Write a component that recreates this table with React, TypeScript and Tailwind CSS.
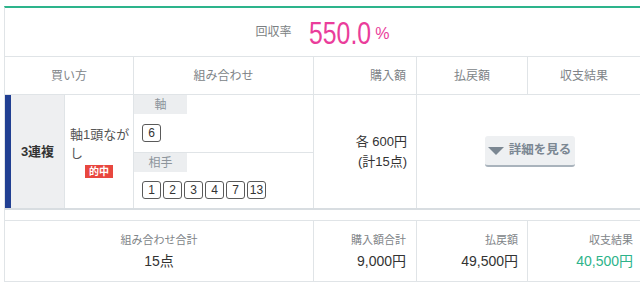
const line = "border-[#e0e4e7]";

function NumBox({ n }: { n: string }) {
  return (
    <div className="w-[19px] h-[18px] border border-[#5a5a5a] rounded-[3px] flex items-center justify-center text-[12px] leading-none text-[#333]">
      {n}
    </div>
  );
}

function Label({ text }: { text: string }) {
  return (
    <div className="w-[53px] h-[19px] bg-[#eceef0] flex items-center justify-center text-[12px] text-[#8d959c]">
      {text}
    </div>
  );
}

export default function App() {
  return (
    <div className="w-[640px] h-[286px] bg-white overflow-hidden pt-[6px] pl-[4px] font-['Liberation_Sans','Noto_Sans_CJK_JP',sans-serif]">
      <div className={`border-l ${line} border-t-2 border-t-[#2db48b]`}>
        {/* 回収率 */}
        <div className={`h-[49px] border-b ${line} flex items-center justify-center`}>
          <span className="text-[12px] text-[#7b7f83] mr-[17px]">回収率</span>
          <span className="inline-block origin-left scale-x-[0.8] mr-[-15px] font-['Liberation_Sans',sans-serif] text-[31px] leading-none text-[#ea3d9b] mt-[2px]">
            550.0
          </span>
          <span className="text-[16px] text-[#ea3d9b] ml-[4px] mt-[4px]">%</span>
        </div>

        {/* column headers */}
        <div className={`h-[38px] border-b ${line} grid grid-cols-[129px_180px_103px_111px_1fr] text-[12px] text-[#808488]`}>
          <div className={`border-r ${line} flex items-center justify-center`}>買い方</div>
          <div className={`border-r ${line} flex items-center justify-center`}>組み合わせ</div>
          <div className={`border-r ${line} flex items-center justify-end pr-[10px]`}>購入額</div>
          <div className={`border-r ${line} flex items-center justify-center`}>払戻額</div>
          <div className="flex items-center justify-center">収支結果</div>
        </div>

        {/* data row */}
        <div className="h-[115px] border-b-2 border-[#d8dde1] grid grid-cols-[129px_180px_103px_1fr]">
          <div className={`flex border-r ${line}`}>
            <div className="w-[6px] bg-[#213f92]" />
            <div className={`w-[54px] bg-[#eeeff1] border-r ${line} flex items-center justify-center text-[13px] font-bold text-[#333]`}>
              3連複
            </div>
            <div className="flex-1 flex flex-col justify-center pl-[5px] pr-[1px]">
              <div className="text-[13px] leading-[19px] text-[#555]">軸1頭ながし</div>
              <div className="flex justify-center mt-[2px] pr-[4px]">
                <span className="bg-[#e8473f] text-white text-[10px] font-bold leading-[13px] px-[4px]">的中</span>
              </div>
            </div>
          </div>

          <div className={`flex flex-col border-r ${line}`}>
            <div className={`h-[58px] border-b ${line}`}>
              <Label text="軸" />
              <div className="flex gap-[2px] pl-[8px] mt-[10px]">
                <NumBox n="6" />
              </div>
            </div>
            <div className="flex-1">
              <Label text="相手" />
              <div className="flex gap-[2px] pl-[8px] mt-[9px]">
                {["1", "2", "3", "4", "7", "13"].map((n) => (
                  <NumBox key={n} n={n} />
                ))}
              </div>
            </div>
          </div>

          <div className={`border-r ${line} flex flex-col justify-center items-end pr-[9px] text-[13px] leading-[20px] text-[#333]`}>
            <div>各 600円</div>
            <div>(計15点)</div>
          </div>

          <div className="flex items-center justify-center pl-[2px]">
            <button className="w-[90px] h-[31px] bg-[#eef0f2] rounded-[3px] border-b-2 border-[#a9b3bc] flex items-center justify-center gap-[5px] text-[12.5px] font-bold text-[#7b8792]">
              <svg width="16" height="8" viewBox="0 0 16 8">
                <path d="M0 0 L16 0 L8 8 Z" fill="#7b8792" />
              </svg>
              詳細を見る
            </button>
          </div>
        </div>

        <div className="h-[10px]" />

        {/* summary */}
        <div className={`h-[62px] border-y ${line} grid grid-cols-[309px_103px_111px_1fr]`}>
          <div className={`border-r ${line} flex flex-col items-center justify-center`}>
            <div className="text-[11px] text-[#808488] leading-[20px]">組み合わせ合計</div>
            <div className="text-[14px] text-[#333] leading-[22px]">15点</div>
          </div>
          <div className={`border-r ${line} flex flex-col items-end justify-center pr-[10px]`}>
            <div className="text-[11px] text-[#808488] leading-[20px]">購入額合計</div>
            <div className="text-[14px] text-[#333] leading-[22px]">9,000円</div>
          </div>
          <div className={`border-r ${line} flex flex-col items-end justify-center pr-[9px]`}>
            <div className="text-[11px] text-[#808488] leading-[20px]">払戻額</div>
            <div className="text-[14px] text-[#333] leading-[22px]">49,500円</div>
          </div>
          <div className="flex flex-col items-end justify-center pr-[7px]">
            <div className="text-[11px] text-[#808488] leading-[20px]">収支結果</div>
            <div className="text-[14px] text-[#2db38a] leading-[22px]">40,500円</div>
          </div>
        </div>
      </div>
    </div>
  );
}
